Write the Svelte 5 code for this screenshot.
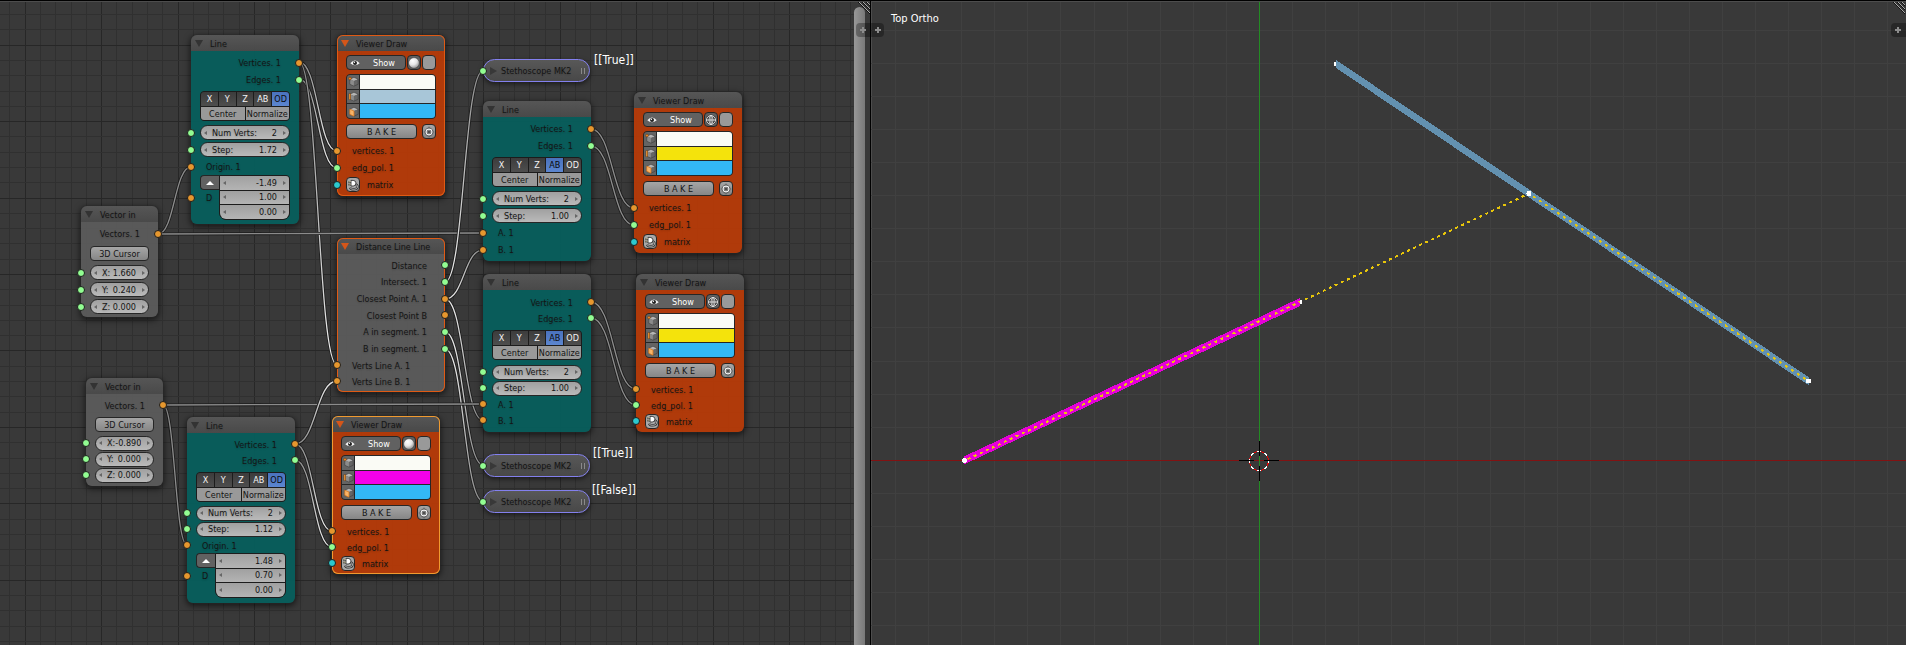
<script>
  const line = (id, x, y, mode, bottom, step, pitch, pad, extra = {}) => ({
    id, kind: 'line', title: 'Line', x, y, w: 108, mode, bottom, step, pitch, pad, ...extra
  });
  const viewer = (id, x, y, edge, icon, pitch, state = '') => ({
    id, kind: 'viewer', title: 'Viewer Draw', x, y, w: 108, edge, icon, pitch, pad: 3, state
  });

  const nodes = [
    line('line1', 191, 35, 'OD', 4, '1.72', 17, 3, { direction: ['-1.49', '1.00', '0.00'] }),
    viewer('viewer1', 337, 35, '#a8c6d8', 'solid', 17, 'selected'),
    line('line2', 483, 101, 'AB', 3, '1.00', 17, 3),
    viewer('viewer2', 634, 92, '#f4e30c', 'wire', 17),
    { id: 'vec1', kind: 'vector', title: 'Vector in', x: 81, y: 206, w: 77, pitch: 17, pad: 3, bottom: 2,
      values: [['X:', '1.660'], ['Y:', '0.240'], ['Z:', '0.000']] },
    { id: 'dist', kind: 'distance', title: 'Distance Line Line', x: 337, y: 238, w: 108, pitch: 16, pad: 3, bottom: 3, state: 'selected' },
    line('line3', 483, 274, 'AB', 4, '1.00', 16, 4, { lead: 4, tail: 4 }),
    viewer('viewer3', 636, 274, '#f4e30c', 'wire', 16),
    { id: 'vec2', kind: 'vector', title: 'Vector in', x: 86, y: 378, w: 77, pitch: 16, pad: 3, bottom: 3,
      values: [['X:', '-0.890'], ['Y:', '0.000'], ['Z:', '0.000']] },
    line('line4', 187, 417, 'OD', 5, '1.12', 16, 3, { lead: 4, direction: ['1.48', '0.70', '0.00'] }),
    viewer('viewer4', 332, 416, '#f400ea', 'solid', 16, 'active')
  ];

  const probes = [
    { x: 483, y: 59, text: '[[True]]', dx: 594, dy: 51 },
    { x: 483, y: 454, text: '[[True]]', dx: 593, dy: 444 },
    { x: 483, y: 490, text: '[[False]]', dx: 592, dy: 481 }
  ];

  const outputs = [
    ['Distance', 'green'], ['Intersect. 1', 'green'], ['Closest Point A. 1', 'orange'],
    ['Closest Point B', 'orange'], ['A in segment. 1', 'green'], ['B in segment. 1', 'green']
  ];

  const dim = '#8c8c8c';
  const lit = '#f0f0f0';
  const links = [
    [299, 62, 337, 151, dim, lit], [299, 79, 337, 168, dim, lit], [299, 62, 337, 365, dim, lit],
    [158, 234, 191, 167, dim, dim], [158, 234, 483, 233, dim, dim],
    [591, 129, 634, 208, dim, dim], [591, 146, 634, 225, dim, dim],
    [591, 302, 636, 389, dim, dim], [591, 318, 636, 405, dim, dim],
    [445, 282, 483, 71, lit, dim], [445, 299, 483, 250, lit, dim], [445, 299, 483, 420, lit, dim],
    [445, 332, 483, 465, lit, dim], [445, 349, 483, 501, lit, dim],
    [163, 405, 483, 404, dim, dim], [163, 405, 187, 545, dim, dim],
    [295, 444, 337, 381, dim, lit], [295, 444, 332, 531, dim, lit], [295, 460, 332, 547, dim, lit]
  ];
  const curve = ([x1, y1, x2, y2]) => {
    const m = (x1 + x2) / 2;
    return `M${x1} ${y1}C${m} ${y1} ${m} ${y2} ${x2} ${y2}`;
  };

  const steps = (origin, gap, limit) => {
    const first = -Math.floor(origin / gap);
    const out = [];
    for (let n = first; origin + n * gap < limit; n++) out.push({ at: Math.floor(origin + n * gap) + 0.5, major: n % 5 === 0 });
    return out;
  };
  const byDepth = (a, b) => a.major - b.major;
  const gx = steps(25.2, 15.29, 2400).sort(byDepth);
  const gy = steps(45.2, 15.29, 1600).sort(byDepth);
  const vx = steps(388.4, 33.08, 2600);
  const vy = steps(460.3, 33.08, 1600);
</script>

{#snippet socket(side, color)}
  <i class="socket {side} {color}"></i>
{/snippet}

{#snippet output(text, color)}
  <div class="row out"><span>{text}</span>{@render socket('right', color)}</div>
{/snippet}

{#snippet input(text, color)}
  <div class="row in"><span>{text}</span>{@render socket('left', color)}</div>
{/snippet}

{#snippet field(label, value, shape)}
  <label class="field {shape}">
    <span>{label}</span>
    <input type="text" {value} aria-label={label || 'Component'} />
  </label>
{/snippet}

{#snippet cube(part)}
  <svg class="cube" viewBox="0 0 14 14" aria-hidden="true">
    <path d="M3 4.5 7.5 2.5 12 4.5 7.5 6.5Z" fill="#b5b5b5" />
    <path d="M3 4.5 7.5 6.5V12L3 10Z" fill="#8b8b8b" />
    <path d="M12 4.5 7.5 6.5V12L12 10Z" fill="#666" />
    <path d="M3 4.5 7.5 2.5 12 4.5V10L7.5 12 3 10Z" fill="none" stroke="#3a3a3a" stroke-width=".6" />
    {#if part === 0}<circle cx="3.2" cy="3.8" r="1.5" fill="#ee8a2a" stroke="#5a3010" stroke-width=".5" />
    {:else if part === 1}<path d="M3 3.8V10.4" stroke="#5a3010" stroke-width="2.4" /><path d="M3 4V10.2" stroke="#ee9a3a" stroke-width="1.4" />
    {:else}<path d="M3 4.5 7.5 6.5V12L3 10Z" fill="#f7b469" stroke="#e07b1c" stroke-width=".8" />{/if}
  </svg>
{/snippet}

<main>
  <section class="editor" aria-label="Node editor">
    <svg class="fill" aria-hidden="true">
      <svg class="grid" width="98%" height="100%" shape-rendering="crispEdges">
        {#each gx as g}<line x1={g.at} x2={g.at} y1="0" y2="100%" class:major={g.major} />{/each}
        {#each gy as g}<line x1="0" x2="100%" y1={g.at} y2={g.at} class:major={g.major} />{/each}
      </svg>
      <defs>
        {#each links as l, i}
          <linearGradient id="link{i}" gradientUnits="userSpaceOnUse" x1={l[0]} y1={l[1]} x2={l[2]} y2={l[3]}>
            <stop offset="0" stop-color={l[4]} /><stop offset="1" stop-color={l[5]} />
          </linearGradient>
        {/each}
      </defs>
      {#each links as l, i}
        <path d={curve(l)} class="casing" />
        <path d={curve(l)} class="wire" stroke="url(#link{i})" />
      {/each}
    </svg>

    {#each nodes as n (n.id)}
      <article
        class="node {n.kind} {n.state ?? ''}"
        style="left:{n.x}px;top:{n.y}px;width:{n.w}px;--pitch:{n.pitch}px;--pad:{n.pad}px;--bottom:{n.bottom ?? 3}px;--lead:{n.lead ?? 3}px;--tail:{n.tail ?? 3}px"
      >
        <header><i class="fold"></i><h2>{n.title}</h2></header>
        <div class="body">
          {#if n.kind === 'line'}
            {@render output('Vertices. 1', 'orange')}
            {@render output('Edges. 1', 'green')}
            <div class="modes">
              <div class="seg five">
                {#each ['X', 'Y', 'Z', 'AB', 'OD'] as m}
                  <button type="button" class:on={m === n.mode} aria-pressed={m === n.mode}>{m}</button>
                {/each}
              </div>
              <div class="seg two"><button type="button">Center</button><button type="button">Normalize</button></div>
            </div>
            <div class="row">{@render field('Num Verts:', '2', 'pill')}{@render socket('left', 'green')}</div>
            <div class="row">{@render field('Step:', n.step, 'pill')}{@render socket('left', 'green')}</div>
            {#if n.direction}
              {@render input('Origin. 1', 'orange')}
              <div class="direction">
                <div class="side">
                  <button type="button" class="dark" aria-label="Direction presets"><i class="up"></i></button>
                  <span>D</span>
                </div>
                <div class="stack">
                  {#each n.direction as v}{@render field('', v, 'cell')}{/each}
                </div>
                {@render socket('left', 'orange')}
              </div>
            {:else}
              {@render input('A. 1', 'orange')}
              {@render input('B. 1', 'orange')}
            {/if}
          {:else if n.kind === 'viewer'}
            <div class="bar show">
              <button type="button" class="dark wide">
                <svg width="10" height="8" viewBox="0 0 10 8" aria-hidden="true">
                  <path d="M.3 4.2Q5-1.2 9.7 4.2 5 8.4.3 4.2Z" fill="#f4f4f4" />
                  <circle cx="5" cy="3.9" r="2" fill="#222" /><circle cx="4.4" cy="3.2" r=".7" fill="#fff" />
                </svg>
                <span>Show</span>
              </button>
              <button type="button" class="dark icon" aria-label="Shading">
                <svg width="12" height="12" viewBox="0 0 12 12" aria-hidden="true">
                  {#if n.icon === 'solid'}
                    <defs><radialGradient id="ball-{n.id}" cx=".38" cy=".3" r=".75">
                      <stop offset="0" stop-color="#fff" /><stop offset=".5" stop-color="#e6e6e6" /><stop offset="1" stop-color="#8a8a8a" />
                    </radialGradient></defs>
                    <circle cx="6" cy="6" r="5.4" fill="url(#ball-{n.id})" stroke="#333" stroke-width=".6" />
                  {:else}
                    <circle cx="6" cy="6" r="5.4" fill="#2e2e2e" />
                    <g fill="none" stroke="#f0f0f0">
                      <circle cx="6" cy="6" r="4.5" stroke-width=".9" /><ellipse cx="6" cy="6" rx="2" ry="4.4" stroke-width=".8" />
                      <path d="M6 1.6V10.4M1.6 6H10.4" stroke-width=".9" />
                    </g>
                  {/if}
                </svg>
              </button>
              <button type="button" class="blank" aria-label="Transparency"></button>
            </div>
            <div class="swatches">
              {#each ['#fafbf5', n.edge, '#33b8f5'] as c, i}
                <button type="button" aria-label="Toggle layer {i + 1}">{@render cube(i)}</button>
                <input type="color" value={c} aria-label="Colour {i + 1}" />
              {/each}
            </div>
            <div class="bar bake">
              <button type="button" class="light"><span>B A K E</span></button>
              <button type="button" class="light" aria-label="Bake settings">
                <svg width="12" height="12" viewBox="0 0 12 12" aria-hidden="true">
                  <path d="M6 .6 11.4 6 6 11.4.6 6Z" fill="#444" />
                  <path d="M6 1.2 7.4 3.4H4.6ZM6 10.8 4.6 8.6H7.4ZM1.2 6 3.4 4.6V7.4ZM10.8 6 8.6 7.4V4.6Z" fill="#fff" />
                  <circle cx="6" cy="6" r="2.9" fill="#8a8a8a" stroke="#444" stroke-width="2" />
                  <circle cx="6" cy="6" r="2.9" fill="none" stroke="#f4f4f4" stroke-width="1.1" />
                  <circle cx="6" cy="6" r=".9" fill="#333" />
                </svg>
              </button>
            </div>
            {@render input('vertices. 1', 'orange')}
            {@render input('edg_pol. 1', 'green')}
            <div class="row matrix">
              <button type="button" class="light" aria-label="Matrix source">
                <svg width="12" height="12" viewBox="0 0 12 12" aria-hidden="true">
                  <path d="M7.5 5.2Q11 5.6 10.6 8 10.2 10.4 6.6 10.4 3.6 10.4 3 8.6" fill="none" stroke="#333" stroke-width="2.2" />
                  <path d="M7.5 5.2Q11 5.6 10.6 8 10.2 10.4 6.6 10.4 3.6 10.4 3 8.6" fill="none" stroke="#bbb" stroke-width=".9" />
                  <path d="M4 1.4H6.2Q9 1.8 9 4 9 6.6 6.2 7H4Z" fill="#fff" stroke="#222" stroke-width=".8" />
                  <path d="M1 2.8H4M1 5.4H4" stroke="#222" stroke-width="1.5" /><path d="M1.2 2.6H4M1.2 5.2H4" stroke="#f2e6b8" stroke-width=".7" />
                </svg>
              </button>
              <span>matrix</span>{@render socket('left', 'cyan')}
            </div>
          {:else if n.kind === 'vector'}
            {@render output('Vectors. 1', 'orange')}
            <button type="button" class="light cursor3d"><span>3D Cursor</span></button>
            {#each n.values as [l, v]}
              <div class="row">{@render field(l, v, 'pill')}{@render socket('left', 'green')}</div>
            {/each}
          {:else}
            <div class="outputs">
              {#each outputs as [t, c]}{@render output(t, c)}{/each}
            </div>
            {@render input('Verts Line A. 1', 'orange')}
            {@render input('Verts Line B. 1', 'orange')}
          {/if}
        </div>
      </article>
    {/each}

    {#each probes as p}
      <article class="probe" style="left:{p.x}px;top:{p.y}px">
        <i class="play"></i><h2>Stethoscope MK2</h2><i class="grip"></i>{@render socket('left', 'green')}
      </article>
      <output style="left:{p.dx}px;top:{p.dy}px">{p.text}</output>
    {/each}

    <div class="scroll"></div>
    <svg class="corner" width="12" height="12" viewBox="0 0 12 12" aria-hidden="true">
      <path d="M0 0 12 12M4 0 12 8M8 0 12 4" class="shade" /><path d="M1 0 12 11M5 0 12 7M9 0 12 3" />
    </svg>
    <button type="button" class="tab end" aria-label="Open properties"></button>
  </section>

  <section class="viewport" aria-label="3D view">
    <svg class="fill" aria-hidden="true">
      <g class="vgrid" shape-rendering="crispEdges">
        {#each vx as g}<line x1={g.at} x2={g.at} y1="0" y2="100%" />{/each}
        {#each vy as g}<line x1="0" x2="100%" y1={g.at} y2={g.at} />{/each}
        <line x1="0" x2="100%" y1="460.5" y2="460.5" class="xaxis" />
        <line x1="388.5" x2="388.5" y1="0" y2="100%" class="yaxis" />
      </g>
      <g shape-rendering="crispEdges">
        <rect x="463" y="62" width="3" height="4" fill="#fff" />
        <path d="M93 456.5 429 298V306L93 464.5Z" fill="#e600d8" />
        <path d="M465 60 937.5 377V385L465 68Z" fill="#6391b0" />
        <g fill="none" stroke="#e8c60a" stroke-width="2">
          <path d="M94 460.5 658 193.5" stroke-dasharray="3 3.66" stroke-dashoffset="-3" />
          <path d="M658 193.5 937 381" stroke-dasharray="3 4.22" stroke-dashoffset="-5" />
        </g>
        <g fill="#fff">
          <circle cx="93.5" cy="460.5" r="2.5" /><circle cx="658" cy="193.5" r="2.5" /><circle cx="937.5" cy="381" r="2.5" />
          <rect x="429" y="300" width="2" height="4" />
        </g>
      </g>
      <g fill="none" shape-rendering="crispEdges">
        <circle cx="388" cy="461" r="9.5" stroke="#f00000" />
        <circle cx="388" cy="461" r="9.5" stroke="#fff" stroke-dasharray="3.73 3.73" stroke-dashoffset="1.8" />
        <path d="M368 460.5H383M393 460.5H408M388.5 441V456M388.5 466V481" stroke="#000" />
      </g>
    </svg>
    <p>Top Ortho</p>
    <button type="button" class="tab start" aria-label="Open tool shelf"></button>
    <button type="button" class="tab end" aria-label="Open properties"></button>
    <svg class="corner" width="12" height="12" viewBox="0 0 12 12" aria-hidden="true">
      <path d="M0 0 12 12M4 0 12 8M8 0 12 4" class="shade" /><path d="M1 0 12 11M5 0 12 7M9 0 12 3" />
    </svg>
  </section>
</main>

<style>
  :global(body) { margin: 0; background: #393939; }
  main {
    display: grid;
    grid-template-columns: minmax(0, 871fr) minmax(0, 1035fr);
    height: 100vh;
    overflow: hidden;
    font: 9px/15px "DejaVu Sans Condensed", "Open Sans", sans-serif;
    color: #141414;
  }
  section { position: relative; overflow: hidden; background: #393939; box-sizing: border-box; }
  section::after {
    content: ""; position: absolute; inset: 0; pointer-events: none;
    border-top: 1px solid #000; box-shadow: inset 0 1px #4d4d4d;
  }
  .editor::after { border-right: 1px solid #000; }
  .viewport { box-shadow: inset 1px 0 #4d4d4d; }
  .fill { position: absolute; inset: 0; width: 100%; height: 100%; }
  .grid line { stroke: #303030; }
  .grid line.major { stroke: #272727; }
  .vgrid line { stroke: #404040; }
  .vgrid .xaxis { stroke: #821212; }
  .vgrid .yaxis { stroke: #238c23; }
  .casing { fill: none; stroke: #1c1c1c; stroke-width: 3; }
  .wire { fill: none; stroke-width: 1.3; }

  h2, p { margin: 0; font: inherit; }
  button, input { font: inherit; color: inherit; margin: 0; padding: 0; border: 0; min-width: 0; box-sizing: border-box; text-shadow: none; }

  .node {
    position: absolute; box-sizing: border-box; border-radius: 6px;
    box-shadow: 0 0 0 1px #2a2a2a66, 0 2px 6px 1px #0009;
    text-shadow: 0 1px 2px #0003;
  }
  .node::after { content: ""; position: absolute; inset: 0; border-radius: 6px; pointer-events: none; }
  .selected::after { box-shadow: inset 0 0 0 1px #e05a14; }
  .active::after { box-shadow: inset 0 0 0 1px #f09a30; }
  .node header {
    display: flex; align-items: center; height: 16px; padding-left: 4px; gap: 7px;
    border-radius: 6px 6px 0 0; background: linear-gradient(#575757f5, #4a4a4af5);
  }
  .fold { border: 4px solid transparent; border-top: 7px solid #333; border-bottom: 0; margin-top: 1px; }
  .selected .fold, .active .fold { border-top-color: #d4561a; }
  .body { padding: var(--pad) 9px var(--bottom); border-radius: 0 0 6px 6px; background: #5b5b5bf2; }
  .line .body { background: #075e5cf5; }
  .viewer .body { background: #b43a08f7; padding-top: 4px; }

  .row { position: relative; display: flex; align-items: center; height: var(--pitch); }
  .out { justify-content: flex-end; padding-right: 9px; }
  .in { padding-left: 6px; }
  .row span, h2 { white-space: nowrap; }
  span, h2 { padding-top: 2px; line-height: 13px; }
  .outputs { display: grid; grid-template-rows: repeat(6, 1fr); height: 100px; }
  .outputs .row { height: auto; }

  .socket {
    position: absolute; z-index: 1; top: 50%; width: 8px; height: 8px; margin-top: -4px;
    box-sizing: border-box; border: 1px solid #1d1d1d; border-radius: 50%;
  }
  .left { left: -13px; }
  .right { right: -13px; }
  .green { background: #92fd92; }
  .orange { background: #e6972e; }
  .cyan { background: #2cc9ce; }

  .modes { margin: var(--lead) 0 var(--tail); border: 1px solid #1c1c1c; border-radius: 4px; overflow: hidden; background: #1c1c1c; height: 30px; box-sizing: border-box; display: grid; grid-template-rows: 14px 13px; gap: 1px; }
  .seg { display: grid; gap: 1px; }
  .five { grid-template-columns: repeat(5, 1fr); }
  .two { grid-template-columns: repeat(2, 1fr); }
  .seg button { background: #999; line-height: 14px; text-align: center; white-space: nowrap; }
  .five button { background: linear-gradient(#3c3c3c, #4e4e4e); color: #f4f4f4; }
  .five button.on { background: linear-gradient(#4a72bd, #5c86d0); color: #0a0a0a; }

  .field { position: relative; display: flex; align-items: center; flex: 1; height: 15px; box-sizing: border-box; padding: 0 12px 0 11px; }
  .field::before, .field::after { content: ""; position: absolute; top: 50%; margin-top: -2px; border: 2px solid transparent; }
  .field::before { left: 3px; border-right: 3px solid #666; border-left: 0; }
  .field::after { right: 3px; border-left: 3px solid #666; border-right: 0; }
  .field input { flex: 1; width: 0; height: 13px; padding-top: 1px; background: none; text-align: right; outline: 0; }
  .field span { padding-top: 1px; }
  .pill { border: 1px solid #262626; border-radius: 8px; background: linear-gradient(#a0a0a0, #bababa); }
  .cell { background: linear-gradient(#a0a0a0, #b4b4b4); height: auto; }

  .direction { position: relative; display: grid; grid-template-columns: 19px 1fr; }
  .side { display: grid; grid-template-rows: 15px 1fr; }
  .side span { padding-left: 6px; }
  .stack { display: grid; grid-template-rows: repeat(3, 1fr); gap: 1px; border: 1px solid #1c1c1c; border-radius: 0 4px 7px 7px; background: #1c1c1c; overflow: hidden; height: 45px; box-sizing: border-box; }
  .side .dark { border-radius: 4px 0 0 4px; border-right: 0; }
  .up { border: 4px solid transparent; border-bottom: 4px solid #fff; border-top: 0; }

  .dark, .blank, .light { border: 1px solid #262626; border-radius: 4px; display: flex; align-items: center; justify-content: center; height: 15px; }
  .dark { background: #616161; color: #fff; }
  .blank { background: #999; }
  .light { background: linear-gradient(#a6a6a6, #868686); }
  .bar { display: grid; }
  .show { grid-template-columns: 1fr 14px 14px; gap: 1px; }
  .icon svg, .bake svg, .matrix svg { flex: none; }
  .wide { justify-content: flex-start; padding-left: 3px; }
  .wide span { flex: 1; text-align: center; padding-left: 3px; }
  .swatches { display: grid; grid-template-columns: 12px 1fr; grid-template-rows: repeat(3, 1fr); gap: 1px; height: 45px; box-sizing: border-box; margin: 4px 0 5px; border: 1px solid #262626; border-radius: 4px; overflow: hidden; background: #262626; }
  .swatches button { background: #646464; display: grid; place-items: center; }
  .cube { width: 13px; height: 13px; }
  .swatches input { appearance: none; width: 100%; height: 100%; background: none; }
  .swatches input::-webkit-color-swatch-wrapper { padding: 0; }
  .swatches input::-webkit-color-swatch { border: 0; border-radius: 0; }
  .bake { grid-template-columns: 1fr 14px; gap: 5px; margin-bottom: 3px; }
  .matrix { gap: 7px; }
  .matrix .light { width: 14px; background: #a8a8a8; flex: none; }
  .cursor3d { width: 100%; margin: 4px 0 3px; }

  .probe {
    position: absolute; width: 107px; height: 23px; box-sizing: border-box; border: 1px solid #8380ee; border-radius: 12px;
    display: flex; align-items: center; padding: 0 4px; gap: 4px;
    background: linear-gradient(#585858, #484848); box-shadow: 0 2px 5px #0008; text-shadow: 0 1px 2px #0003;
  }
  .probe .socket { left: -5px; }
  .play { border: 4px solid transparent; border-left: 7px solid #383838; border-right: 0; margin-left: 2px; }
  .probe h2 { flex: 1; }
  .grip { width: 2px; height: 6px; border: solid #8a8a8a; border-width: 0 1px; }
  output { position: absolute; font-size: 12px; line-height: 18px; color: #fff; white-space: nowrap; }

  .scroll { position: absolute; top: 7px; right: 6px; bottom: -8px; width: 11px; border-radius: 6px; background: linear-gradient(90deg, #989898, #797979); }
  .corner { position: absolute; top: 2px; right: 1px; fill: none; stroke: #aaa; }
  .shade { stroke: #111; }
  .tab { position: absolute; top: 23px; width: 15px; height: 14px; background: #0000004d; }
  .tab.end { right: 0; border-radius: 4px 0 0 4px; }
  .tab.start { left: 0; border-radius: 0 4px 4px 0; width: 13px; }
  .tab::before, .tab::after { content: ""; position: absolute; background: #8c8c8c; }
  .tab::before { left: 4px; top: 6px; width: 6px; height: 2px; }
  .tab::after { left: 6px; top: 4px; width: 2px; height: 6px; }
  .viewport p { position: absolute; left: 20px; top: 10px; font-size: 11px; line-height: 18px; color: #fff; }
</style>
